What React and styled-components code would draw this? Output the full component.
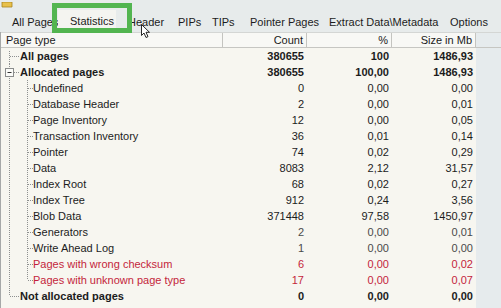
import React from 'react';
import styled, { createGlobalStyle } from 'styled-components';

const Global = createGlobalStyle`
  html, body { margin: 0; padding: 0; background: #e7ebeb; }
  body { font-family: "Liberation Sans", Arial, sans-serif; font-size: 11px; color: #1a1a1a; }
`;

const COLS = '222px 84px 85px 84px 1fr';

const Window = styled.div`
  position: relative;
  width: 501px;
  height: 308px;
  overflow: hidden;
  background: #e7ebeb;
  display: flex;
  flex-direction: column;
`;

const TopStrip = styled.div`
  height: 8px;
  display: flex;
  align-items: flex-end;
  padding-left: 1px;
  overflow: hidden;
`;

const TabBar = styled.div`
  height: 24px;
  display: flex;
  align-items: flex-end;
`;

const Tab = styled.div`
  width: ${p => p.$w}px;
  height: ${p => (p.$active ? 22 : 20)}px;
  box-sizing: border-box;
  padding-left: 12px;
  display: flex;
  align-items: center;
  white-space: nowrap;
  color: #1c1c1c;
  background: ${p => (p.$active ? '#f4f4f0' : 'transparent')};
  padding-bottom: ${p => (p.$active ? 0 : 0)}px;
`;

const Table = styled.div`
  flex: 1;
  display: flex;
  flex-direction: column;
  background: #f7f6f0;
  border-left: 1px solid #a6a8a8;
`;

const HeaderRow = styled.div`
  display: grid;
  grid-template-columns: ${COLS};
  height: 14px;
  border-bottom: 1px solid #c6c6c2;
  border-top: 1px solid #d4d6d4;
  box-sizing: content-box;
`;

const HeadCell = styled.div`
  display: flex;
  align-items: center;
  justify-content: ${p => (p.$right ? 'flex-end' : 'flex-start')};
  padding: 0 ${p => (p.$right ? 3 : 0)}px 0 ${p => (p.$right ? 0 : 5)}px;
  background: #f8f8f5;
  border-right: 1px solid #c4c4c0;
  white-space: nowrap;
  color: #1a1a1a;
`;

const Filler = styled.div`
  background: #e6ebed;
`;

const Row = styled.div`
  display: grid;
  grid-template-columns: ${COLS};
  height: 16px;
`;

const NameCell = styled.div`
  display: flex;
  align-items: center;
  white-space: nowrap;
  font-weight: ${p => (p.$bold ? 700 : 400)};
  color: ${p => p.$color};
`;

const NumCell = styled.div`
  display: flex;
  align-items: center;
  justify-content: flex-end;
  padding-right: 3px;
  font-weight: ${p => (p.$bold ? 700 : 400)};
  color: ${p => p.$color};
`;

const Highlight = styled.div`
  position: absolute;
  left: 52px;
  top: 3px;
  width: 80px;
  height: 30px;
  box-sizing: border-box;
  border: 5px solid #52b550;
  pointer-events: none;
`;

const Cursor = styled.svg`
  position: absolute;
  left: 141px;
  top: 24px;
`;

const tabs = [
  { t: 'All Pages', w: 58 },
  { t: 'Statistics', w: 58, active: true },
  { t: 'Header', w: 50 },
  { t: 'PIPs', w: 34 },
  { t: 'TIPs', w: 38 },
  { t: 'Pointer Pages', w: 79 },
  { t: 'Extract Data\\Metadata', w: 121 },
  { t: 'Options', w: 63 },
];

const RED = '#c41f3b';

const rows = [
  { n: 'All pages', c: '380655', p: '100', s: '1486,93', bold: true, lvl: 0, first: true },
  { n: 'Allocated pages', c: '380655', p: '100,00', s: '1486,93', bold: true, lvl: 0, box: true },
  { n: 'Undefined', c: '0', p: '0,00', s: '0,00', lvl: 1 },
  { n: 'Database Header', c: '2', p: '0,00', s: '0,01', lvl: 1 },
  { n: 'Page Inventory', c: '12', p: '0,00', s: '0,05', lvl: 1 },
  { n: 'Transaction Inventory', c: '36', p: '0,01', s: '0,14', lvl: 1 },
  { n: 'Pointer', c: '74', p: '0,02', s: '0,29', lvl: 1 },
  { n: 'Data', c: '8083', p: '2,12', s: '31,57', lvl: 1 },
  { n: 'Index Root', c: '68', p: '0,02', s: '0,27', lvl: 1 },
  { n: 'Index Tree', c: '912', p: '0,24', s: '3,56', lvl: 1 },
  { n: 'Blob Data', c: '371448', p: '97,58', s: '1450,97', lvl: 1 },
  { n: 'Generators', c: '2', p: '0,00', s: '0,01', lvl: 1, muted: true },
  { n: 'Write Ahead Log', c: '1', p: '0,00', s: '0,00', lvl: 1, muted: true },
  { n: 'Pages with wrong checksum', c: '6', p: '0,00', s: '0,02', lvl: 1, red: true },
  { n: 'Pages with unknown page type', c: '17', p: '0,00', s: '0,07', lvl: 1, red: true, lastChild: true },
  { n: 'Not allocated pages', c: '0', p: '0,00', s: '0,00', bold: true, lvl: 0, last: true },
];

const LINE = '#8e9090';

function Branch({ r }) {
  const w = r.lvl === 0 ? 19 : 32;
  return (
    <svg width={w} height="16" style={{ flex: 'none' }}>
      <line x1="8.5" x2="8.5" y1={r.first ? 3 : 0} y2={r.last ? 8 : 16}
        stroke={LINE} strokeDasharray="1 1" />
      {r.lvl === 0 && !r.box && (
        <line x1="9" x2="18" y1="8.5" y2="8.5" stroke={LINE} strokeDasharray="1 1" />
      )}
      {r.box && (
        <g>
          <rect x="4.5" y="4.5" width="8" height="8" fill="#fbfbf8" stroke="#8a8c8c" />
          <line x1="6.5" x2="10.5" y1="8.5" y2="8.5" stroke="#333" />
          <line x1="13" x2="18" y1="8.5" y2="8.5" stroke={LINE} strokeDasharray="1 1" />
        </g>
      )}
      {r.lvl === 1 && (
        <g>
          <line x1="26.5" x2="26.5" y1="0" y2={r.lastChild ? 8 : 16} stroke={LINE} strokeDasharray="1 1" />
          <line x1="27" x2="32" y1="8.5" y2="8.5" stroke={LINE} strokeDasharray="1 1" />
        </g>
      )}
    </svg>
  );
}

export default function App() {
  return (
    <>
      <Global />
      <Window>
        <TopStrip>
          <svg width="12" height="6" viewBox="0 0 12 6">
            <path d="M1 0 H11 V5 H1 Z" fill="#e8c04a" stroke="#a88420" strokeWidth="0.8" />
          </svg>
        </TopStrip>
        <TabBar>
          {tabs.map(t => (
            <Tab key={t.t} $w={t.w} $active={t.active}>{t.t}</Tab>
          ))}
        </TabBar>
        <Table>
          <HeaderRow>
            <HeadCell>Page type</HeadCell>
            <HeadCell $right>Count</HeadCell>
            <HeadCell $right>%</HeadCell>
            <HeadCell $right>Size in Mb</HeadCell>
            <Filler />
          </HeaderRow>
          {rows.map(r => {
            const nameColor = r.red ? RED : '#1c1c1c';
            const numColor = r.red ? RED : r.muted ? '#4a4a4a' : '#1c1c1c';
            return (
              <Row key={r.n}>
                <NameCell $bold={r.bold} $color={nameColor}>
                  <Branch r={r} />
                  {r.n}
                </NameCell>
                <NumCell $bold={r.bold} $color={numColor}>{r.c}</NumCell>
                <NumCell $bold={r.bold} $color={numColor}>{r.p}</NumCell>
                <NumCell $bold={r.bold} $color={numColor}>{r.s}</NumCell>
                <Filler />
              </Row>
            );
          })}
          <Row style={{ flex: 1 }}>
            <div />
            <div />
            <div />
            <div />
            <Filler />
          </Row>
        </Table>
        <Highlight />
        <Cursor width="11" height="15" viewBox="0 0 11 15">
          <path d="M0.5 0.5 L0.5 11.5 L3 9 L5 13.5 L7 12.6 L5 8.3 L8.5 8.3 Z" fill="#fff" stroke="#111" strokeWidth="0.9" strokeLinejoin="round" />
        </Cursor>
      </Window>
    </>
  );
}
